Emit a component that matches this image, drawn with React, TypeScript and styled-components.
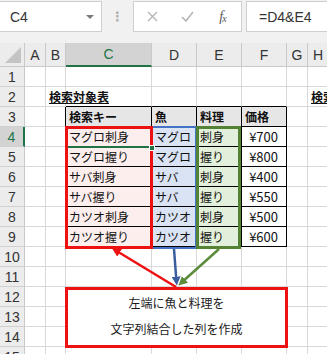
import styled, { createGlobalStyle } from "styled-components";

const GlobalStyle = createGlobalStyle`
  html, body { margin: 0; padding: 0; background: #fff; overflow: hidden; }
  body { font-family: "Noto Sans CJK JP", "Liberation Sans", sans-serif; }
`;

const Page = styled.div`
  position: relative;
  width: 327px;
  height: 354px;
  overflow: hidden;
  background: #fff;
`;

/* ---------- formula bar ---------- */

const FormulaBar = styled.div`
  display: flex;
  height: 43px;
  box-sizing: border-box;
  padding: 1px 0 11px;
  background: #f1f1f1;
`;

const Box = styled.div`
  display: flex;
  align-items: center;
  box-sizing: border-box;
  background: #fff;
  border: 1px solid #cfcfcf;
`;

const NameBox = styled(Box)`
  width: 103px;
  margin-left: -1px;
  padding: 0 7px 0 10px;
  justify-content: space-between;
  font: 14px "Liberation Sans", sans-serif;
  color: #333;
`;

const DropArrow = styled.span`
  width: 0;
  height: 0;
  border-left: 4px solid transparent;
  border-right: 4px solid transparent;
  border-top: 4px solid #7a7a7a;
`;

const Splitter = styled.div`
  width: 31px;
  display: flex;
  align-items: center;
  justify-content: center;
  color: #b0b0b0;
  font: bold 13px "DejaVu Sans", sans-serif;
`;

const Tools = styled(Box)`
  width: 109px;
  justify-content: space-around;
  padding: 0 1px;
`;

const ToolIcon = styled.span`
  width: 34px;
  display: flex;
  align-items: center;
  justify-content: center;
`;

const Fx = styled.span`
  font: italic 14px "Liberation Serif", serif;
  color: #555;
  letter-spacing: -1px;
  & sub {
    font-size: 10px;
    vertical-align: -1px;
  }
`;

const FormulaInput = styled(Box)`
  flex: 1;
  margin-left: 4px;
  padding-left: 12px;
  border-right: none;
  font: 14px "Liberation Sans", sans-serif;
  color: #333;
`;

/* ---------- sheet grid ---------- */

const Sheet = styled.div`
  display: grid;
  grid-template-columns: 25px 21px 20px 86px 45px 45px 45px 21px 21px 40px;
  grid-template-rows: 24px repeat(15, 20px);
`;

const Corner = styled.div`
  position: relative;
  background: #ececec;
  border-right: 1px solid #c9c9c9;
  border-bottom: 1px solid #c9c9c9;
  &::after {
    content: "";
    position: absolute;
    right: 3px;
    bottom: 3px;
    width: 0;
    height: 0;
    border-left: 16px solid transparent;
    border-bottom: 16px solid #c4c4c4;
  }
`;

const ColHead = styled.div<{ $active?: boolean }>`
  display: flex;
  align-items: center;
  justify-content: center;
  box-sizing: border-box;
  font: 14px "Liberation Sans", sans-serif;
  color: ${(p) => (p.$active ? "#217346" : "#333")};
  background: ${(p) => (p.$active ? "#d3d3d3" : "#ececec")};
  border-right: 1px solid #c9c9c9;
  border-bottom: ${(p) => (p.$active ? "2px solid #217346" : "1px solid #c9c9c9")};
`;

const RowHead = styled.div<{ $active?: boolean }>`
  display: flex;
  align-items: center;
  justify-content: center;
  box-sizing: border-box;
  font: 14px "Liberation Sans", sans-serif;
  color: ${(p) => (p.$active ? "#217346" : "#333")};
  background: ${(p) => (p.$active ? "#d3d3d3" : "#ececec")};
  border-bottom: 1px solid #d0d0d0;
  border-right: ${(p) => (p.$active ? "2px solid #217346" : "1px solid #c9c9c9")};
`;

type Tone = "plain" | "head" | "pink" | "blue" | "green";

const toneBg: Record<Tone, string> = {
  plain: "transparent",
  head: "#e7e6e6",
  pink: "#fdeeee",
  blue: "#dae3f3",
  green: "#e2efda",
};

const Cell = styled.div<{
  $tone: Tone;
  $rb: boolean;
  $bb: boolean;
  $right?: boolean;
  $title?: boolean;
}>`
  display: flex;
  align-items: center;
  justify-content: ${(p) => (p.$right ? "flex-end" : "flex-start")};
  box-sizing: border-box;
  padding: ${(p) => (p.$right ? "0 8px 0 0" : "0 0 0 3px")};
  white-space: nowrap;
  overflow: visible;
  font-size: ${(p) => (p.$right ? "13px" : "12px")};
  font-weight: ${(p) => (p.$tone === "head" || p.$title ? 700 : 400)};
  text-decoration: ${(p) => (p.$title ? "underline" : "none")};
  color: #111;
  background: ${(p) => toneBg[p.$tone]};
  border-right: 1px solid ${(p) => (p.$rb ? "#000" : "#d9d9d9")};
  border-bottom: 1px solid ${(p) => (p.$bb ? "#000" : "#d9d9d9")};
`;

/* ---------- overlays ---------- */

const Frame = styled.div<{
  $x: number;
  $y: number;
  $w: number;
  $h: number;
  $color: string;
  $line: number;
}>`
  position: absolute;
  left: ${(p) => p.$x}px;
  top: ${(p) => p.$y}px;
  width: ${(p) => p.$w}px;
  height: ${(p) => p.$h}px;
  box-sizing: border-box;
  border: ${(p) => `${p.$line}px solid ${p.$color}`};
  pointer-events: none;
`;

const FillHandle = styled.div`
  position: absolute;
  left: 149px;
  top: 145px;
  width: 4px;
  height: 4px;
  background: #217346;
  border: 1px solid #fff;
`;

const Callout = styled.div`
  position: absolute;
  left: 65px;
  top: 287px;
  width: 223px;
  height: 61px;
  box-sizing: border-box;
  border: 3px solid #ee1111;
  background: #fff;
  display: flex;
  flex-direction: column;
  align-items: center;
  font-size: 12px;
  line-height: 26px;
  color: #1a1a1a;
`;

const Arrows = styled.svg`
  position: absolute;
  left: 0;
  top: 0;
  pointer-events: none;
`;

/* ---------- data ---------- */

const COLS = ["A", "B", "C", "D", "E", "F", "G", "H", "I"];

const TABLE: Record<number, string[]> = {
  3: ["検索キー", "魚", "料理", "価格"],
  4: ["マグロ刺身", "マグロ", "刺身", "¥700"],
  5: ["マグロ握り", "マグロ", "握り", "¥800"],
  6: ["サバ刺身", "サバ", "刺身", "¥400"],
  7: ["サバ握り", "サバ", "握り", "¥550"],
  8: ["カツオ刺身", "カツオ", "刺身", "¥500"],
  9: ["カツオ握り", "カツオ", "握り", "¥600"],
};

const DATA_TONES: Tone[] = ["pink", "blue", "green", "plain"];

function cellFor(row: number, col: number) {
  // col: 0 = A ... 8 = I
  const inTable = row >= 3 && row <= 9;
  const tableCol = col >= 2 && col <= 5;
  const rb = inTable && col >= 1 && col <= 5;
  const bb = row >= 2 && row <= 9 && tableCol;
  let text = "";
  let tone: Tone = "plain";
  let right = false;
  let title = false;
  if (row === 2 && col === 1) {
    text = "検索対象表";
    title = true;
  }
  if (row === 2 && col === 7) {
    text = "検索";
    title = true;
  }
  if (inTable && tableCol) {
    text = TABLE[row][col - 2];
    tone = row === 3 ? "head" : DATA_TONES[col - 2];
    right = row > 3 && col === 5;
  }
  return (
    <Cell
      key={`${row}-${col}`}
      $tone={tone}
      $rb={rb}
      $bb={bb}
      $right={right}
      $title={title}
    >
      {text}
    </Cell>
  );
}

function ArrowMarker({ id, color }: { id: string; color: string }) {
  return (
    <marker
      id={id}
      viewBox="0 0 10 10"
      refX="6"
      refY="5"
      markerWidth="9"
      markerHeight="9"
      markerUnits="userSpaceOnUse"
      orient="auto"
    >
      <path d="M0,0 L10,5 L0,10 z" fill={color} />
    </marker>
  );
}

export default function App() {
  const rows = Array.from({ length: 15 }, (_, i) => i + 1);
  return (
    <Page>
      <GlobalStyle />
      <FormulaBar>
        <NameBox>
          C4
          <DropArrow />
        </NameBox>
        <Splitter>⋮</Splitter>
        <Tools>
          <ToolIcon>
            <svg width="11" height="11" viewBox="0 0 11 11">
              <path d="M1,1 L10,10 M10,1 L1,10" stroke="#b5b5b5" strokeWidth="1.4" />
            </svg>
          </ToolIcon>
          <ToolIcon>
            <svg width="13" height="11" viewBox="0 0 13 11">
              <path d="M1,6 L5,10 L12,1" stroke="#b5b5b5" strokeWidth="1.6" fill="none" />
            </svg>
          </ToolIcon>
          <ToolIcon>
            <Fx>
              f<sub>x</sub>
            </Fx>
          </ToolIcon>
        </Tools>
        <FormulaInput>=D4&amp;E4</FormulaInput>
      </FormulaBar>

      <Sheet>
        <Corner />
        {COLS.map((c) => (
          <ColHead key={c} $active={c === "C"}>
            {c}
          </ColHead>
        ))}
        {rows.map((r) => [
          <RowHead key={`h${r}`} $active={r === 4}>
            {r}
          </RowHead>,
          ...COLS.map((_, ci) => cellFor(r, ci)),
        ])}
      </Sheet>

      <Frame $x={66} $y={126} $w={87} $h={22} $color="#217346" $line={2} />
      <Frame $x={151} $y={126} $w={46} $h={123} $color="#4472c4" $line={2} />
      <Frame $x={196} $y={126} $w={45} $h={123} $color="#548235" $line={3} />
      <Frame $x={65} $y={126} $w={88} $h={123} $color="#ee1111" $line={3} />
      <FillHandle />

      <Arrows width="327" height="354">
        <defs>
          <ArrowMarker id="head-red" color="#ee1111" />
          <ArrowMarker id="head-blue" color="#3a5f9f" />
          <ArrowMarker id="head-green" color="#5b8b3b" />
        </defs>
        <line
          x1="176"
          y1="287"
          x2="115"
          y2="250"
          stroke="#ee1111"
          strokeWidth="2.5"
          markerEnd="url(#head-red)"
        />
        <line
          x1="174"
          y1="249"
          x2="176.5"
          y2="282"
          stroke="#3a5f9f"
          strokeWidth="2.5"
          markerEnd="url(#head-blue)"
        />
        <line
          x1="219"
          y1="249"
          x2="181"
          y2="283"
          stroke="#5b8b3b"
          strokeWidth="2.5"
          markerEnd="url(#head-green)"
        />
      </Arrows>

      <Callout>
        <span>左端に魚と料理を</span>
        <span>文字列結合した列を作成</span>
      </Callout>
    </Page>
  );
}
